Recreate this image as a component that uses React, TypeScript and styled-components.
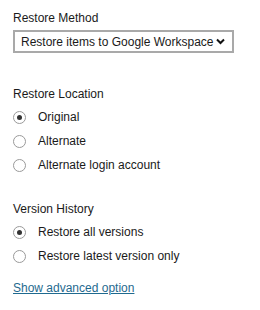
import React from 'react';
import styled, { createGlobalStyle } from 'styled-components';

const GlobalStyle = createGlobalStyle`
  body {
    margin: 0;
    background: #fff;
    font-family: Arial, "Liberation Sans", sans-serif;
    color: #1a1a1a;
  }
`;

const Panel = styled.div`
  display: flex;
  flex-direction: column;
  padding: 10px 13px 0 13px;
  width: 260px;
  box-sizing: border-box;
`;

const Section = styled.div<{ gap?: number }>`
  display: flex;
  flex-direction: column;
  margin-bottom: ${p => p.gap ?? 0}px;
`;

const Label = styled.div`
  font-size: 12px;
  line-height: 16px;
  margin-bottom: 3px;
`;

const SelectBox = styled.div`
  display: flex;
  align-items: center;
  justify-content: space-between;
  width: 221px;
  height: 23px;
  box-sizing: border-box;
  border: 2px solid #a9a9a9;
  padding: 0 7px 0 6px;
  font-size: 12px;
  margin-top: 1px;
`;

const RadioRow = styled.label`
  display: flex;
  align-items: center;
  height: 24px;
  font-size: 12px;
  cursor: pointer;
`;

const RadioDot = styled.span<{ checked?: boolean }>`
  width: 13px;
  height: 13px;
  border-radius: 50%;
  border: 1px solid #9a9a9a;
  box-sizing: border-box;
  margin-right: 12px;
  display: flex;
  align-items: center;
  justify-content: center;
  &::after {
    content: '';
    display: ${p => (p.checked ? 'block' : 'none')};
    width: 5px;
    height: 5px;
    border-radius: 50%;
    background: #333;
  }
`;

const Link = styled.a`
  font-size: 12px;
  color: #1f6a8f;
  text-decoration: underline;
  line-height: 16px;
`;

const Chevron = () => (
  <svg width="9" height="7" viewBox="0 0 9 7">
    <path d="M1 1.5 L4.5 5 L8 1.5" stroke="#111" strokeWidth="2" fill="none" />
  </svg>
);

const Radio: React.FC<{ label: string; checked?: boolean }> = ({ label, checked }) => (
  <RadioRow>
    <RadioDot checked={checked} />
    {label}
  </RadioRow>
);

export default function App() {
  return (
    <>
      <GlobalStyle />
      <Panel>
        <Section gap={33}>
          <Label>Restore Method</Label>
          <SelectBox>
            <span>Restore items to Google Workspace</span>
            <Chevron />
          </SelectBox>
        </Section>
        <Section gap={24}>
          <Label>Restore Location</Label>
          <Radio label="Original" checked />
          <Radio label="Alternate" />
          <Radio label="Alternate login account" />
        </Section>
        <Section gap={12}>
          <Label>Version History</Label>
          <Radio label="Restore all versions" checked />
          <Radio label="Restore latest version only" />
        </Section>
        <Link href="#">Show advanced option</Link>
      </Panel>
    </>
  );
}
